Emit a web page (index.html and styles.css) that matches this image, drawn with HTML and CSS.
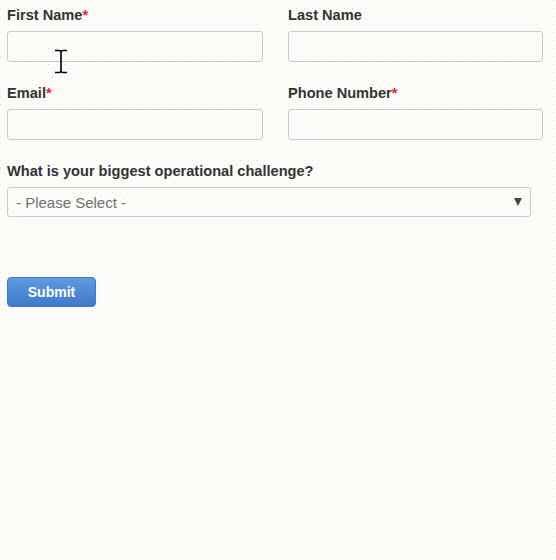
FILE: index.html
```html
<!DOCTYPE html>
<html>
<head>
<meta charset="utf-8">
<link rel="stylesheet" href="styles.css">
</head>
<body>
<form class="form">
  <div class="row">
    <div class="field">
      <label class="label">First Name<span class="req">*</span></label>
      <input class="input" type="text">
    </div>
    <div class="field">
      <label class="label">Last Name</label>
      <input class="input" type="text">
    </div>
  </div>
  <div class="row">
    <div class="field">
      <label class="label">Email<span class="req">*</span></label>
      <input class="input" type="text">
    </div>
    <div class="field">
      <label class="label">Phone Number<span class="req">*</span></label>
      <input class="input" type="text">
    </div>
  </div>
  <div class="field wide">
    <label class="label">What is your biggest operational challenge?</label>
    <div class="select-wrap">
      <select class="select"><option>- Please Select -</option></select>
      <span class="arrow"></span>
    </div>
  </div>
  <button class="submit" type="button">Submit</button>
</form>
<svg class="cursor" width="14" height="25" viewBox="0 0 14 25">
  <path d="M1 1.5 H5 Q7 1.5 7 3.5 V21.5 Q7 23.5 5 23.5 H1 M13 1.5 H9 Q7 1.5 7 3.5 M7 21.5 Q7 23.5 9 23.5 H13" fill="none" stroke="#000" stroke-width="1.6"/>
</svg>
</body>
</html>
```
FILE: styles.css
```css
html, body {
  margin: 0;
  padding: 0;
}
body {
  width: 556px;
  height: 560px;
  background-color: #fcfcfe;
  background-image:
    radial-gradient(circle at 0.5px 0.5px, #f7ef6a 0.55px, transparent 0.7px),
    radial-gradient(circle at 4.5px 4.5px, #f7ef6a 0.55px, transparent 0.7px);
  background-size: 8px 8px;
  font-family: "Liberation Sans", Arial, sans-serif;
  position: relative;
}
.form {
  padding: 6px 0 0 7px;
  display: flex;
  flex-direction: column;
  gap: 22px;
}
.row {
  display: grid;
  grid-template-columns: 256px 255px;
  column-gap: 25px;
}
.field {
  display: flex;
  flex-direction: column;
  gap: 7px;
}
.wide {
  width: 524px;
}
.label {
  padding-top: 1px;
  font-size: 14.6px;
  line-height: 17px;
  height: 17px;
  font-weight: bold;
  color: #333333;
}
.req {
  color: #e8261c;
}
.input {
  box-sizing: border-box;
  height: 31px;
  width: 100%;
  margin: 0;
  border: 1px solid #c9c9d4;
  border-radius: 3px;
  background: transparent;
}
.select-wrap {
  position: relative;
  height: 30px;
}
.select {
  appearance: none;
  -webkit-appearance: none;
  box-sizing: border-box;
  display: block;
  width: 100%;
  height: 30px;
  margin: 0;
  padding: 0 0 0 8px;
  border: 1px solid #c9c9d4;
  border-radius: 3px;
  background: transparent;
  font-family: "Liberation Sans", Arial, sans-serif;
  font-size: 15px;
  color: #707070;
}
.arrow {
  position: absolute;
  right: 9px;
  top: 11px;
  width: 0;
  height: 0;
  border-left: 4.5px solid transparent;
  border-right: 4.5px solid transparent;
  border-top: 8px solid #444444;
}
.submit {
  margin-top: 38px;
  align-self: flex-start;
  width: 89px;
  height: 30px;
  border: 1px solid #3f78c6;
  border-radius: 4px;
  background: linear-gradient(#5f9be0, #3e79cc);
  color: #ffffff;
  font-family: "Liberation Sans", Arial, sans-serif;
  font-size: 14px;
  font-weight: bold;
  padding: 0;
}
.cursor {
  position: absolute;
  left: 54px;
  top: 49px;
}
```
